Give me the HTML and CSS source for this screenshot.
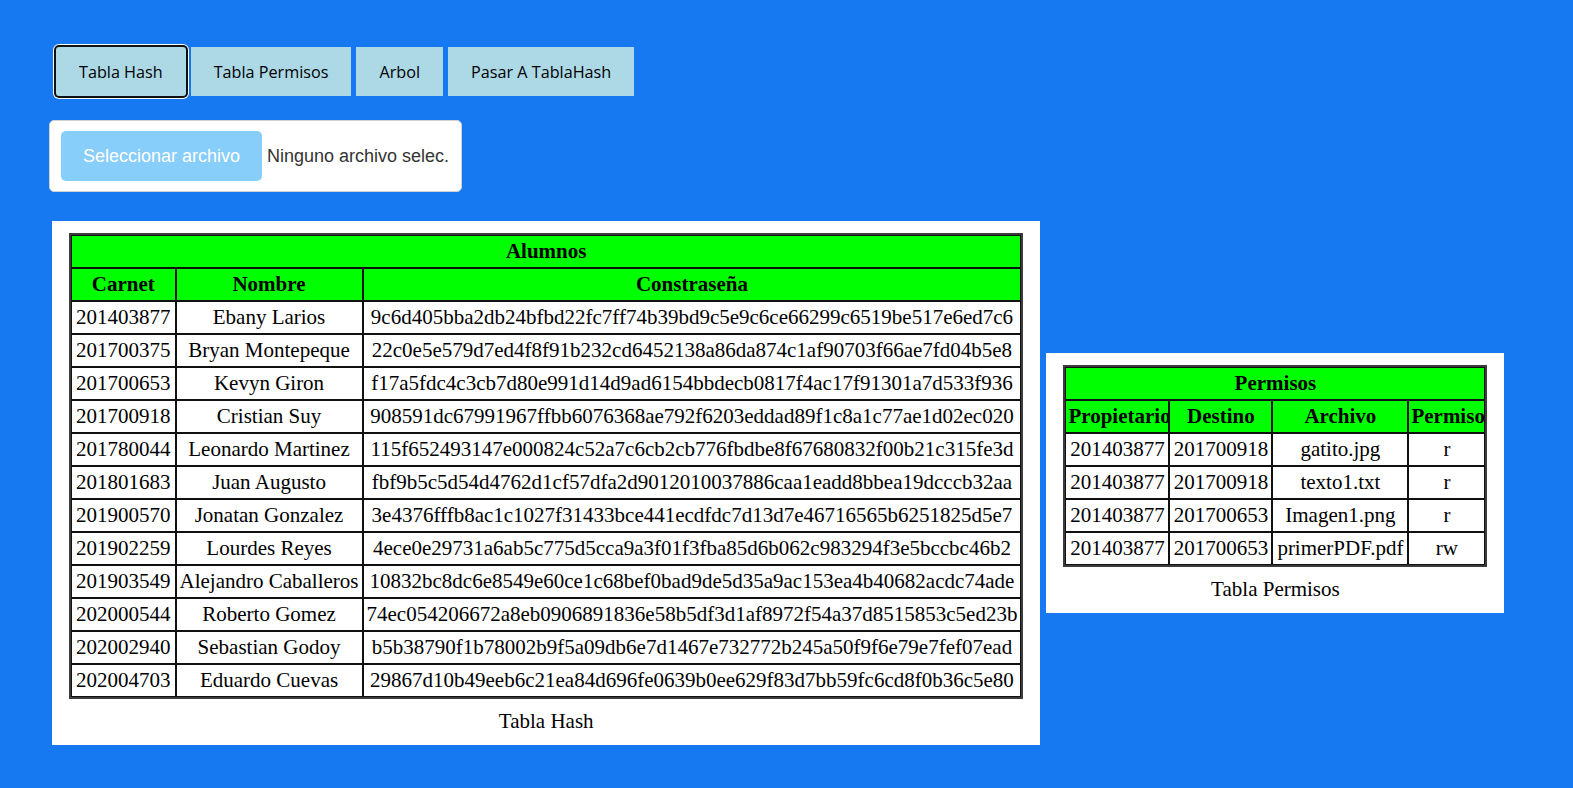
FILE: index.html
```html
<!DOCTYPE html>
<html lang="es">
<head>
<meta charset="utf-8">
<title>Tabla Hash</title>
<link rel="stylesheet" href="styles.css">
</head>
<body>
<div class="page">
  <nav class="tabs">
    <button class="tab tab-active">Tabla Hash</button>
    <button class="tab">Tabla Permisos</button>
    <button class="tab">Arbol</button>
    <button class="tab">Pasar A TablaHash</button>
  </nav>

  <div class="file-box">
    <span class="file-btn">Seleccionar archivo</span>
    <span class="file-name">Ninguno archivo selec.</span>
  </div>

  <div class="panels">
    <div class="panel">
      <table class="grid hash">
        <caption>Tabla Hash</caption>
        <thead>
          <tr><th colspan="3">Alumnos</th></tr>
          <tr><th>Carnet</th><th>Nombre</th><th>Constraseña</th></tr>
        </thead>
        <tbody>
          <tr><td>201403877</td><td>Ebany Larios</td><td>9c6d405bba2db24bfbd22fc7ff74b39bd9c5e9c6ce66299c6519be517e6ed7c6</td></tr>
          <tr><td>201700375</td><td>Bryan Montepeque</td><td>22c0e5e579d7ed4f8f91b232cd6452138a86da874c1af90703f66ae7fd04b5e8</td></tr>
          <tr><td>201700653</td><td>Kevyn Giron</td><td>f17a5fdc4c3cb7d80e991d14d9ad6154bbdecb0817f4ac17f91301a7d533f936</td></tr>
          <tr><td>201700918</td><td>Cristian Suy</td><td>908591dc67991967ffbb6076368ae792f6203eddad89f1c8a1c77ae1d02ec020</td></tr>
          <tr><td>201780044</td><td>Leonardo Martinez</td><td>115f652493147e000824c52a7c6cb2cb776fbdbe8f67680832f00b21c315fe3d</td></tr>
          <tr><td>201801683</td><td>Juan Augusto</td><td>fbf9b5c5d54d4762d1cf57dfa2d9012010037886caa1eadd8bbea19dcccb32aa</td></tr>
          <tr><td>201900570</td><td>Jonatan Gonzalez</td><td>3e4376fffb8ac1c1027f31433bce441ecdfdc7d13d7e46716565b6251825d5e7</td></tr>
          <tr><td>201902259</td><td>Lourdes Reyes</td><td>4ece0e29731a6ab5c775d5cca9a3f01f3fba85d6b062c983294f3e5bccbc46b2</td></tr>
          <tr><td>201903549</td><td>Alejandro Caballeros</td><td>10832bc8dc6e8549e60ce1c68bef0bad9de5d35a9ac153ea4b40682acdc74ade</td></tr>
          <tr><td>202000544</td><td>Roberto Gomez</td><td>74ec054206672a8eb0906891836e58b5df3d1af8972f54a37d8515853c5ed23b</td></tr>
          <tr><td>202002940</td><td>Sebastian Godoy</td><td>b5b38790f1b78002b9f5a09db6e7d1467e732772b245a50f9f6e79e7fef07ead</td></tr>
          <tr><td>202004703</td><td>Eduardo Cuevas</td><td>29867d10b49eeb6c21ea84d696fe0639b0ee629f83d7bb59fc6cd8f0b36c5e80</td></tr>
        </tbody>
      </table>
    </div>

    <div class="panel">
      <table class="grid perm">
        <caption>Tabla Permisos</caption>
        <colgroup>
          <col class="c-prop"><col class="c-dest"><col class="c-arch"><col class="c-perm">
        </colgroup>
        <thead>
          <tr><th colspan="4">Permisos</th></tr>
          <tr><th>Propietario</th><th>Destino</th><th>Archivo</th><th>Permisos</th></tr>
        </thead>
        <tbody>
          <tr><td>201403877</td><td>201700918</td><td>gatito.jpg</td><td>r</td></tr>
          <tr><td>201403877</td><td>201700918</td><td>texto1.txt</td><td>r</td></tr>
          <tr><td>201403877</td><td>201700653</td><td>Imagen1.png</td><td>r</td></tr>
          <tr><td>201403877</td><td>201700653</td><td>primerPDF.pdf</td><td>rw</td></tr>
        </tbody>
      </table>
    </div>
  </div>
</div>
</body>
</html>
```

FILE: styles.css
```css
html, body {
  margin: 0;
  padding: 0;
}

body {
  background: #1679f2;
  min-height: 788px;
}

.page {
  padding-top: 47px;
}

.tabs {
  display: flex;
  gap: 5px;
  margin-left: 56px;
}

.tab {
  height: 49px;
  padding: 0 23px;
  border: none;
  border-radius: 0;
  background: #add8e6;
  color: #000;
  font-family: "Open Sans", "Noto Sans", sans-serif;
  font-size: 16.2px;
  cursor: pointer;
}

.tab-active {
  border-radius: 3px;
  box-shadow: 0 0 0 2px #111, 0 0 0 3px #fff;
}

.file-box {
  display: inline-flex;
  align-items: center;
  margin: 24px 0 0 49px;
  height: 72px;
  box-sizing: border-box;
  padding: 0 12px 0 11px;
  background: #fff;
  border: 1px solid #d0d0d0;
  border-radius: 5px;
  font-family: "Liberation Sans", Arial, sans-serif;
  font-size: 18px;
  white-space: nowrap;
}

.file-btn {
  display: flex;
  align-items: center;
  justify-content: center;
  width: 201px;
  height: 50px;
  flex: none;
  border-radius: 5px;
  background: #87cefa;
  color: #fff;
}

.file-name {
  margin-left: 5px;
  color: #333;
}

.panels {
  display: flex;
  align-items: center;
  gap: 6px;
  margin: 29px 0 0 52px;
}

.panel {
  background: #fff;
  padding: 12px 17px;
}

.grid {
  border-collapse: separate;
  border-spacing: 0;
  border: 2px solid #3c3c3c;
  font-family: "Liberation Serif", "Times New Roman", serif;
  font-size: 21px;
  color: #000;
}

.grid caption {
  caption-side: bottom;
  padding-top: 10px;
  line-height: 24px;
}

.grid th,
.grid td {
  border: 1px solid #111;
  padding: 3px 3px;
  line-height: 25px;
  text-align: center;
  white-space: nowrap;
}

.hash td:first-child,
.hash th:first-child {
  padding-left: 4px;
  padding-right: 4px;
}

.grid th {
  background: #00ff00;
  font-weight: bold;
}

.perm {
  table-layout: fixed;
  width: 424px;
}

.perm th,
.perm td {
  overflow: hidden;
  text-overflow: clip;
  padding: 3px 2px;
}

.perm .c-prop { width: 104px; }
.perm .c-dest { width: 103px; }
.perm .c-arch { width: 136px; }
.perm .c-perm { width: 77px; }
```
